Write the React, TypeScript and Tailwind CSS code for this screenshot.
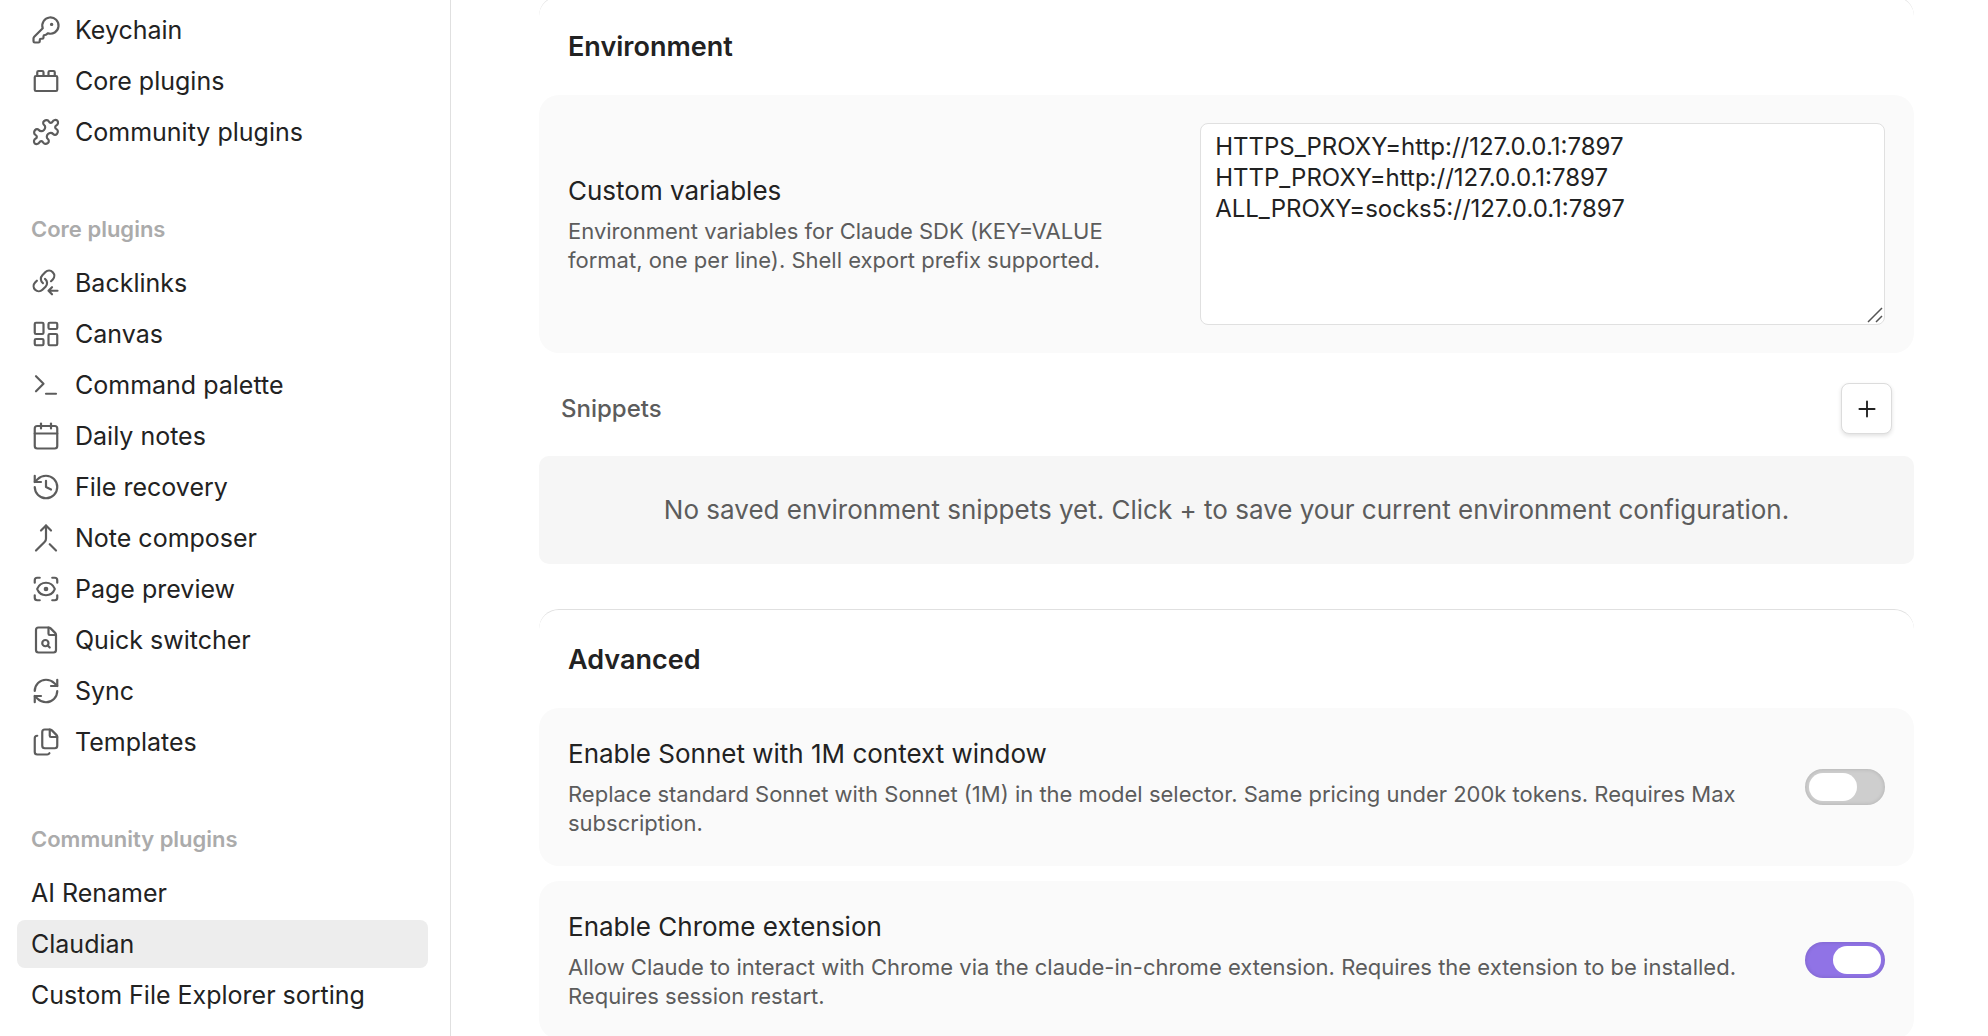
import { useState } from "react";
import type { ComponentType, ReactNode } from "react";
import {
  Calendar,
  Files,
  History,
  KeyRound,
  LayoutDashboard,
  Merge,
  Plus,
  RefreshCw,
  ScanEye,
  Terminal,
  ToyBrick,
} from "lucide-react";

type IconProps = { className?: string; strokeWidth?: number };
type NavItem = { label: string; icon?: ComponentType<IconProps>; active?: boolean };

function Svg({ className, strokeWidth, children }: IconProps & { children: ReactNode }) {
  return (
    <svg
      viewBox="0 0 24 24"
      fill="none"
      stroke="currentColor"
      strokeWidth={strokeWidth}
      strokeLinecap="round"
      strokeLinejoin="round"
      className={className}
    >
      {children}
    </svg>
  );
}

function PuzzleIcon(props: IconProps) {
  return (
    <Svg {...props}>
      <path d="M10.4 3.3C12 2 13.6 2.4 14.3 3.6C15 5 16.6 5 17.2 3.8C18 2.2 20 2 21.1 2.9C22 4 21.8 6 20.2 6.8C19 7.4 19 9 20.4 9.7C21.6 10.4 22 12 20.7 13.6C19.8 14.6 18.2 14.4 17.5 13.4C16.8 12.4 14.9 12.3 13.6 13.6C12.3 14.9 12.4 16.8 13.4 17.5C14.4 18.2 14.6 19.8 13.6 20.7C12 22 10.4 21.6 9.7 20.4C9 19 7.4 19 6.8 20.2C6 21.8 4 22 2.9 21.1C2 20 2.2 18 3.8 17.2C5 16.6 5 15 3.6 14.3C2.4 13.6 2 12 3.3 10.4C4.2 9.4 5.8 9.6 6.5 10.6C7.2 11.6 9.1 11.7 10.4 10.4C11.7 9.1 11.6 7.2 10.6 6.5C9.6 5.8 9.4 4.2 10.4 3.3Z" />
    </Svg>
  );
}

function BacklinksIcon(props: IconProps) {
  return (
    <Svg {...props}>
      <g transform="translate(0.4 0.4) scale(0.83)" strokeWidth="2.1">
        <path d="M11 14a5 5 0 0 1-.54-7.54l3-3a5 5 0 0 1 7.07 7.07l-1.71 1.72" />
        <path d="M13 10a5 5 0 0 1 .54 7.54l-3 3a5 5 0 0 1-7.07-7.07l1.71-1.71" />
      </g>
      <path d="M21.2 18.2H14M16.8 15.4 14 18.2l2.8 2.8" />
    </Svg>
  );
}

function QuickSwitcherIcon(props: IconProps) {
  return (
    <Svg {...props}>
      <path d="M6 22a2 2 0 0 1-2-2V4a2 2 0 0 1 2-2h8a2.4 2.4 0 0 1 1.704.706l3.588 3.588A2.4 2.4 0 0 1 20 8v12a2 2 0 0 1-2 2z" />
      <path d="M14 2v5a1 1 0 0 0 1 1h5" />
      <circle cx="11.5" cy="14.5" r="2.5" />
      <path d="M13.3 16.3 15 18" />
    </Svg>
  );
}

const optionItems: NavItem[] = [
  { label: "Keychain", icon: KeyRound },
  { label: "Core plugins", icon: ToyBrick },
  { label: "Community plugins", icon: PuzzleIcon },
];

const coreItems: NavItem[] = [
  { label: "Backlinks", icon: BacklinksIcon },
  { label: "Canvas", icon: LayoutDashboard },
  { label: "Command palette", icon: Terminal },
  { label: "Daily notes", icon: Calendar },
  { label: "File recovery", icon: History },
  { label: "Note composer", icon: Merge },
  { label: "Page preview", icon: ScanEye },
  { label: "Quick switcher", icon: QuickSwitcherIcon },
  { label: "Sync", icon: RefreshCw },
  { label: "Templates", icon: Files },
];

const communityItems: NavItem[] = [
  { label: "AI Renamer" },
  { label: "Claudian", active: true },
  { label: "Custom File Explorer sorting" },
];

function NavList({ items }: { items: NavItem[] }) {
  return (
    <ul className="flex flex-col gap-[3px]">
      {items.map(({ label, icon: Icon, active }) => (
        <li key={label}>
          <a
            href="#"
            aria-current={active ? "page" : undefined}
            className={`flex h-12 items-center gap-3.5 rounded-lg px-3.5 text-[25px] leading-8 whitespace-nowrap ${
              active ? "bg-[#ededed]" : ""
            }`}
          >
            {Icon && <Icon className="size-[30px] shrink-0 text-[#5c5c5c]" strokeWidth={1.75} />}
            {label}
          </a>
        </li>
      ))}
    </ul>
  );
}

function NavHeading({ children }: { children: ReactNode }) {
  return (
    <h2 className="px-3.5 pt-[57px] pb-3.5 text-[22px] leading-8 font-semibold text-[#ababab]">
      {children}
    </h2>
  );
}

function SectionHeading({ children }: { children: ReactNode }) {
  return (
    <h2 className="rounded-[20px] border-t border-[#e0e0e0] px-[29px] pt-8 pb-[30px] text-[27px] leading-9 font-semibold">
      {children}
    </h2>
  );
}

type SettingProps = { id: string; name: string; description: string; children: ReactNode };

function Setting({ id, name, description, children }: SettingProps) {
  return (
    <div className="flex items-center gap-8 rounded-[20px] bg-[#fafafa] px-[29px] py-7">
      <div className="flex-1">
        <label htmlFor={id} className="block text-[26px] leading-9">
          {name}
        </label>
        <p className="mt-2 text-[22px] leading-[29px] text-[#5c5c5c]">{description}</p>
      </div>
      {children}
    </div>
  );
}

function Toggle({ id, initial }: { id: string; initial: boolean }) {
  const [on, setOn] = useState(initial);
  return (
    <input
      id={id}
      type="checkbox"
      role="switch"
      checked={on}
      onChange={(e) => setOn(e.target.checked)}
      className="h-9 w-20 shrink-0 cursor-pointer appearance-none rounded-full bg-[#cecece] p-1 inset-shadow-[0_0_4px_rgba(0,0,0,0.15)] before:block before:h-7 before:w-12 before:rounded-full before:bg-white checked:bg-[#9073e6] checked:before:ml-6"
    />
  );
}

export default function App() {
  const [variables, setVariables] = useState(
    "HTTPS_PROXY=http://127.0.0.1:7897\nHTTP_PROXY=http://127.0.0.1:7897\nALL_PROXY=socks5://127.0.0.1:7897"
  );

  return (
    <div className="flex h-screen overflow-hidden bg-white font-['Inter',sans-serif] text-[#222222]">
      <nav className="w-[451px] shrink-0 border-r border-[#e0e0e0] pt-1.5 pr-[22px] pl-[17px]">
        <NavList items={optionItems} />
        <NavHeading>Core plugins</NavHeading>
        <NavList items={coreItems} />
        <NavHeading>Community plugins</NavHeading>
        <NavList items={communityItems} />
      </nav>

      {/* The pane is scrolled part of the way into the Environment section */}
      <main className="-mt-1 min-w-0 flex-1 pr-[74px] pl-[88px]">
        <section>
          <SectionHeading>Environment</SectionHeading>
          <Setting
            id="custom-variables"
            name="Custom variables"
            description="Environment variables for Claude SDK (KEY=VALUE format, one per line). Shell export prefix supported."
          >
            <div className="relative w-[52%]">
              <textarea
                id="custom-variables"
                value={variables}
                onChange={(e) => setVariables(e.target.value)}
                spellCheck={false}
                className="block h-[202px] w-full resize-none rounded-lg border border-[#e0e0e0] bg-white px-3.5 py-[7px] text-[24px] leading-[31px]"
              />
              <svg
                viewBox="0 0 16 16"
                fill="none"
                stroke="#555555"
                strokeWidth="1.5"
                className="pointer-events-none absolute right-0.5 bottom-0.5 size-4"
              >
                <path d="M1 15 15 1M9 15l6-6" />
              </svg>
            </div>
          </Setting>

          <div className="flex items-center justify-between px-[22px] pt-[30px] pb-[22px]">
            <h3 className="text-[24px] leading-8 font-medium text-[#5c5c5c]">Snippets</h3>
            <button
              type="button"
              aria-label="Save current environment"
              className="flex size-[51px] items-center justify-center rounded-lg border border-[#dcdcdc] bg-white shadow-[0_2px_4px_rgba(0,0,0,0.12)]"
            >
              <Plus className="size-[26px]" strokeWidth={1.75} />
            </button>
          </div>
          <p className="rounded-[10px] bg-[#f6f6f6] px-7 py-9 text-center text-[26px] leading-9 text-[#5c5c5c]">
            No saved environment snippets yet. Click + to save your current environment configuration.
          </p>
        </section>

        <section className="mt-[45px]">
          <SectionHeading>Advanced</SectionHeading>
          <div className="flex flex-col gap-[15px]">
            <Setting
              id="sonnet-1m"
              name="Enable Sonnet with 1M context window"
              description="Replace standard Sonnet with Sonnet (1M) in the model selector. Same pricing under 200k tokens. Requires Max subscription."
            >
              <Toggle id="sonnet-1m" initial={false} />
            </Setting>
            <Setting
              id="chrome-extension"
              name="Enable Chrome extension"
              description="Allow Claude to interact with Chrome via the claude-in-chrome extension. Requires the extension to be installed. Requires session restart."
            >
              <Toggle id="chrome-extension" initial={true} />
            </Setting>
          </div>
        </section>
      </main>
    </div>
  );
}
